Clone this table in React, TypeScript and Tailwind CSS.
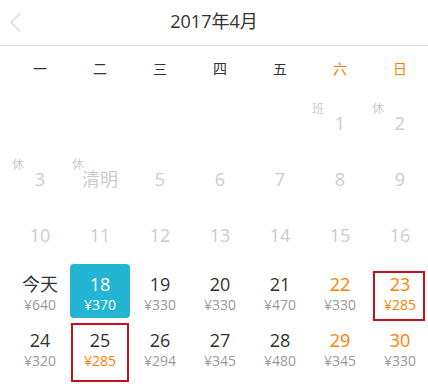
import React from "react";

type Day = {
  label: string;
  price?: string;
  tag?: string;
  past?: boolean;
  weekend?: boolean;
  hotPrice?: boolean;
  selected?: boolean;
  marked?: "a" | "b";
};

const weekdays = ["一", "二", "三", "四", "五", "六", "日"];

const days: (Day | null)[] = [
  null, null, null, null, null,
  { label: "1", tag: "班", past: true },
  { label: "2", tag: "休", past: true },
  { label: "3", tag: "休", past: true },
  { label: "清明", tag: "休", past: true },
  { label: "5", past: true },
  { label: "6", past: true },
  { label: "7", past: true },
  { label: "8", past: true },
  { label: "9", past: true },
  { label: "10", past: true },
  { label: "11", past: true },
  { label: "12", past: true },
  { label: "13", past: true },
  { label: "14", past: true },
  { label: "15", past: true },
  { label: "16", past: true },
  { label: "今天", price: "¥640" },
  { label: "18", price: "¥370", selected: true },
  { label: "19", price: "¥330" },
  { label: "20", price: "¥330" },
  { label: "21", price: "¥470" },
  { label: "22", price: "¥330", weekend: true },
  { label: "23", price: "¥285", weekend: true, hotPrice: true, marked: "a" },
  { label: "24", price: "¥320" },
  { label: "25", price: "¥285", hotPrice: true, marked: "b" },
  { label: "26", price: "¥294" },
  { label: "27", price: "¥345" },
  { label: "28", price: "¥480" },
  { label: "29", price: "¥345", weekend: true },
  { label: "30", price: "¥330", weekend: true },
];

function Cell({ day }: { day: Day | null }) {
  if (!day) return <div />;

  const numColor = day.selected
    ? "text-white"
    : day.past
      ? "text-[#cccccc]"
      : day.weekend
        ? "text-[#ff8000]"
        : "text-[#333333]";
  const priceColor = day.selected
    ? "text-white"
    : day.hotPrice
      ? "text-[#ff8000]"
      : "text-[#999999]";

  return (
    <div className="relative flex items-center justify-center py-px">
      <div
        className={`flex h-full w-full flex-col items-center justify-center rounded ${
          day.price ? "pt-[6px]" : ""
        } ${day.selected ? "bg-[#25b5d4]" : ""}`}
      >
        <span className={`text-[18px] leading-[22px] ${numColor}`}>{day.label}</span>
        {day.price && (
          <span className={`text-[14px] leading-[20px] ${priceColor}`}>{day.price}</span>
        )}
      </div>
      {day.tag && (
        <span className="absolute left-[2px] top-[7px] text-[12px] leading-[14px] text-[#cccccc]">
          {day.tag}
        </span>
      )}
      {day.marked === "a" && (
        <div className="pointer-events-none absolute left-[3px] top-[8px] h-[50px] w-[52px] border-2 border-[#c4121c]" />
      )}
      {day.marked === "b" && (
        <div className="pointer-events-none absolute left-[1px] top-[4px] h-[59px] w-[58px] border-2 border-[#c4121c]" />
      )}
    </div>
  );
}

export default function App() {
  return (
    <div
      className="h-[388px] w-[428px] overflow-hidden bg-white"
      style={{ fontFamily: '"Open Sans", "Noto Sans CJK SC", sans-serif' }}
    >
      <header className="relative flex h-[46px] items-center justify-center border-b border-[#dddddd] pb-[2px]">
        <svg
          className="absolute left-[8px] top-[12px]"
          width="14"
          height="20"
          viewBox="0 0 14 20"
          fill="none"
        >
          <path d="M12 1.5 3 10.5l9 9" stroke="#e2e2e2" strokeWidth="2" />
        </svg>
        <h1 className="text-[18px] text-[#333333]">2017年4月</h1>
      </header>

      <div className="grid h-[44px] grid-cols-[repeat(7,60px)] items-center pl-[10px]">
        {weekdays.map((w, i) => (
          <div
            key={w}
            className={`text-center text-[14px] ${i >= 5 ? "text-[#ff8000]" : "text-[#333333]"}`}
          >
            {w}
          </div>
        ))}
      </div>

      <div className="grid auto-rows-[56px] grid-cols-[repeat(7,60px)] pl-[10px] pt-[5px]">
        {days.map((d, i) => (
          <Cell key={i} day={d} />
        ))}
      </div>
    </div>
  );
}
